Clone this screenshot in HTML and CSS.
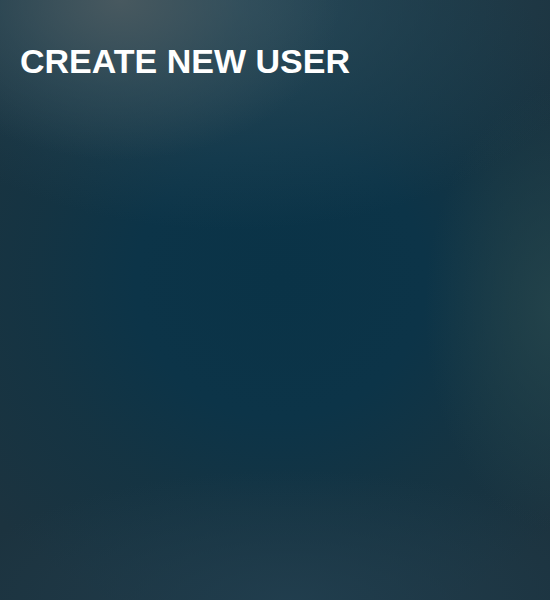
FILE: index.html
```html
<!DOCTYPE html>
<html lang="en">
<head>
<meta charset="utf-8">
<title>Create new user</title>
<link rel="stylesheet" href="styles.css">
</head>
<body>
<main class="page">
  <h1 class="title">CREATE NEW USER</h1>
</main>
</body>
</html>
```
FILE: styles.css
```css
html, body {
  margin: 0;
  padding: 0;
  height: 100%;
}
body {
  font-family: "Liberation Sans", Arial, Helvetica, sans-serif;
  background-color: #1c333f;
  background-image:
    radial-gradient(ellipse 220px 160px at 120px 0px, rgba(74, 90, 96, 0.95) 0%, rgba(60, 84, 94, 0.5) 55%, rgba(40, 70, 85, 0) 100%),
    radial-gradient(ellipse 380px 230px at 230px 0px, rgba(44, 78, 94, 0.85) 0%, rgba(38, 72, 88, 0.45) 55%, rgba(30, 60, 75, 0) 100%),
    radial-gradient(ellipse 130px 220px at 555px 310px, rgba(36, 68, 75, 0.9) 0%, rgba(30, 60, 70, 0) 100%),
    radial-gradient(ellipse 340px 130px at 290px 600px, rgba(33, 62, 78, 0.95) 0%, rgba(30, 58, 72, 0) 100%),
    radial-gradient(ellipse 380px 360px at 280px 280px, #0a3347 0%, #0c3448 38%, rgba(18, 52, 68, 0.75) 65%, rgba(28, 51, 63, 0) 100%);
  background-repeat: no-repeat;
}
.page {
  padding: 41px 20px 0;
}
.title {
  margin: 0;
  color: #ffffff;
  font-size: 34px;
  font-weight: 700;
  line-height: 40px;
  letter-spacing: 0;
}
```
